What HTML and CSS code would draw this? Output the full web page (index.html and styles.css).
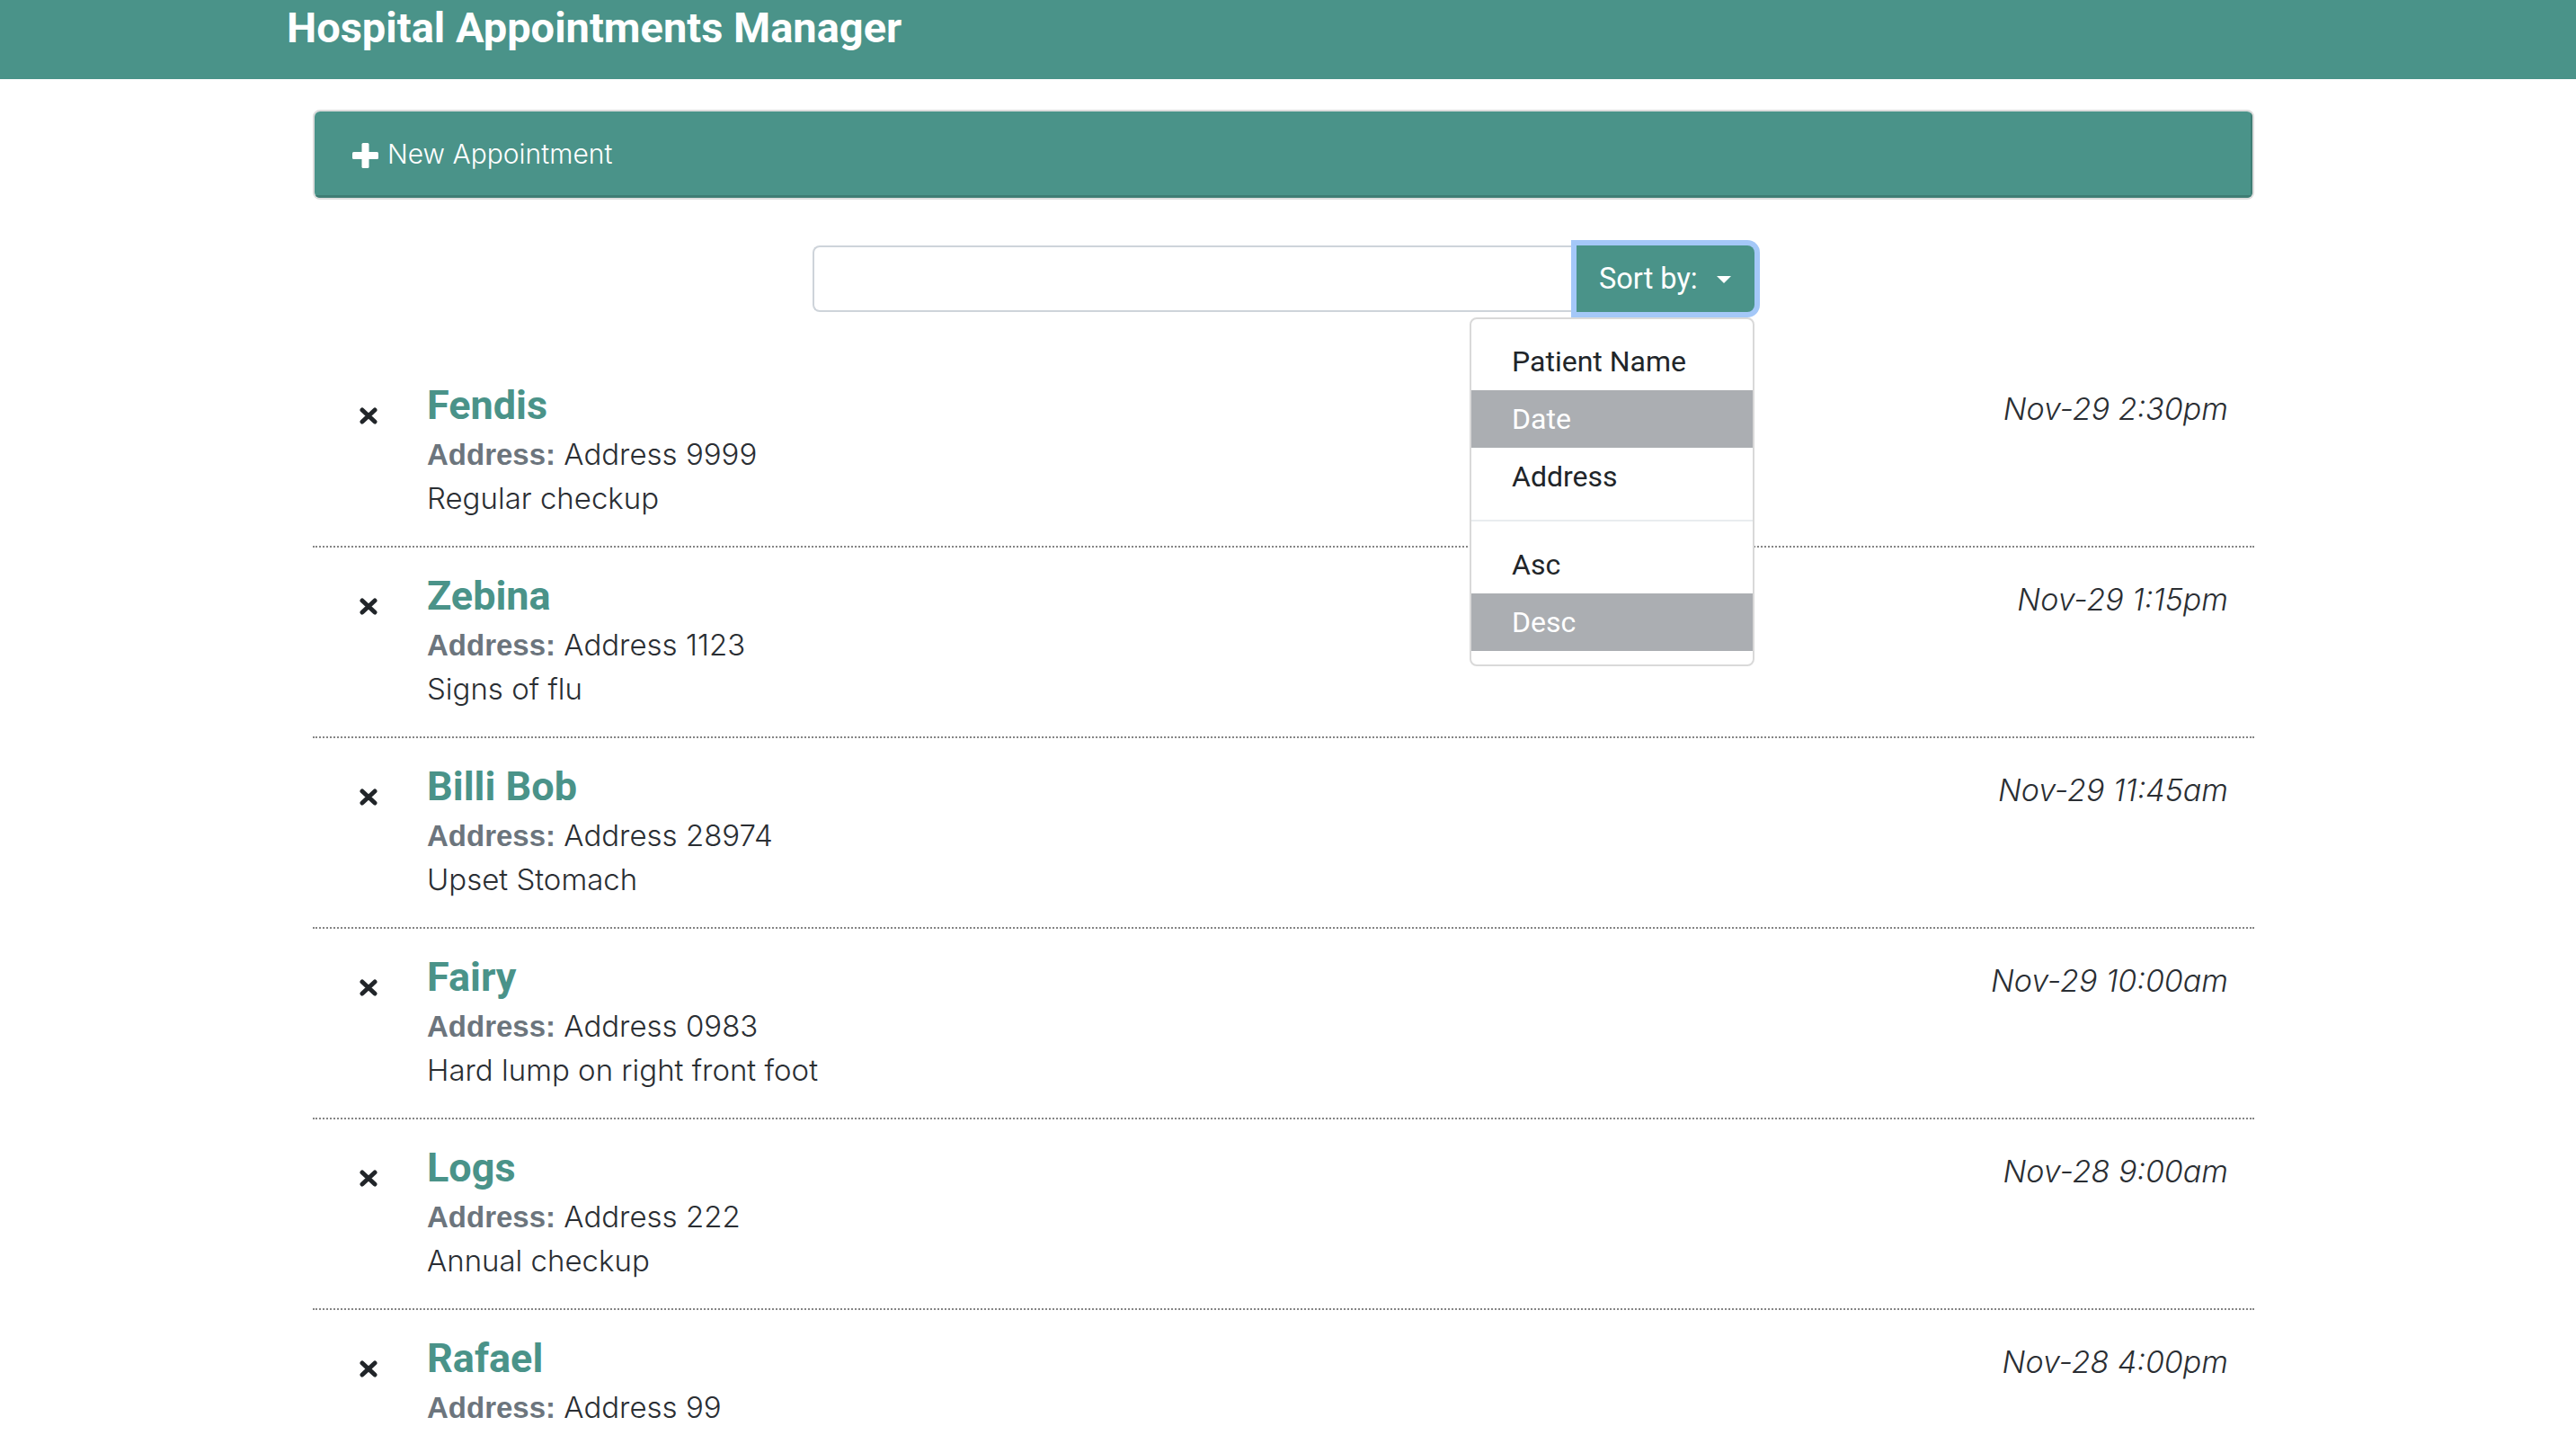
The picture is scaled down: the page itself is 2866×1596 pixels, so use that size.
FILE: index.html
```html
<!DOCTYPE html>
<html lang="en">
<head>
<meta charset="utf-8">
<title>Hospital Appointments Manager</title>
<link rel="stylesheet" href="styles.css">
</head>
<body>
<header class="topbar">
  <h1 class="brand">Hospital Appointments Manager</h1>
</header>
<main class="container">
  <div class="add-card">
    <div class="add-head">
      <svg class="plus" width="29" height="28" viewBox="0 0 29 28"><rect x="0" y="10" width="29" height="8" rx="1.5" fill="#fff"/><rect x="10.5" y="0" width="8" height="28" rx="1.5" fill="#fff"/></svg>
      <span class="add-label">New Appointment</span>
    </div>
  </div>

  <div class="search-group">
    <input class="search-input" type="text" aria-label="Search">
    <button class="sort-btn" type="button">Sort by: <span class="caret"></span></button>
    <div class="dropdown">
      <div class="dd-item">Patient Name</div>
      <div class="dd-item active">Date</div>
      <div class="dd-item">Address</div>
      <div class="dd-divider"></div>
      <div class="dd-item">Asc</div>
      <div class="dd-item active">Desc</div>
    </div>
  </div>

  <ul class="appt-list">
    <li class="appt">
      <svg class="del" width="20" height="19" viewBox="0 0 20 19"><path d="M3 3 L17 16 M17 3 L3 16" stroke="#212529" stroke-width="5" stroke-linecap="round"/></svg>
      <div class="info">
        <div class="pet">Fendis</div>
        <div class="line"><span class="lbl">Address:</span> Address 9999</div>
        <div class="line">Regular checkup</div>
      </div>
      <div class="date">Nov-29 2:30pm</div>
    </li>
    <li class="appt">
      <svg class="del" width="20" height="19" viewBox="0 0 20 19"><path d="M3 3 L17 16 M17 3 L3 16" stroke="#212529" stroke-width="5" stroke-linecap="round"/></svg>
      <div class="info">
        <div class="pet">Zebina</div>
        <div class="line"><span class="lbl">Address:</span> Address 1123</div>
        <div class="line">Signs of flu</div>
      </div>
      <div class="date">Nov-29 1:15pm</div>
    </li>
    <li class="appt">
      <svg class="del" width="20" height="19" viewBox="0 0 20 19"><path d="M3 3 L17 16 M17 3 L3 16" stroke="#212529" stroke-width="5" stroke-linecap="round"/></svg>
      <div class="info">
        <div class="pet">Billi Bob</div>
        <div class="line"><span class="lbl">Address:</span> Address 28974</div>
        <div class="line">Upset Stomach</div>
      </div>
      <div class="date">Nov-29 11:45am</div>
    </li>
    <li class="appt">
      <svg class="del" width="20" height="19" viewBox="0 0 20 19"><path d="M3 3 L17 16 M17 3 L3 16" stroke="#212529" stroke-width="5" stroke-linecap="round"/></svg>
      <div class="info">
        <div class="pet">Fairy</div>
        <div class="line"><span class="lbl">Address:</span> Address 0983</div>
        <div class="line">Hard lump on right front foot</div>
      </div>
      <div class="date">Nov-29 10:00am</div>
    </li>
    <li class="appt">
      <svg class="del" width="20" height="19" viewBox="0 0 20 19"><path d="M3 3 L17 16 M17 3 L3 16" stroke="#212529" stroke-width="5" stroke-linecap="round"/></svg>
      <div class="info">
        <div class="pet">Logs</div>
        <div class="line"><span class="lbl">Address:</span> Address 222</div>
        <div class="line">Annual checkup</div>
      </div>
      <div class="date">Nov-28 9:00am</div>
    </li>
    <li class="appt">
      <svg class="del" width="20" height="19" viewBox="0 0 20 19"><path d="M3 3 L17 16 M17 3 L3 16" stroke="#212529" stroke-width="5" stroke-linecap="round"/></svg>
      <div class="info">
        <div class="pet">Rafael</div>
        <div class="line"><span class="lbl">Address:</span> Address 99</div>
      </div>
      <div class="date">Nov-28 4:00pm</div>
    </li>
  </ul>
</main>
</body>
</html>
```

FILE: styles.css
```css
* { box-sizing: border-box; }

html, body {
  margin: 0;
  padding: 0;
  background: #ffffff;
}

body {
  font-family: Roboto, "Liberation Sans", Arial, sans-serif;
  color: #212529;
  overflow: hidden;
}

.topbar {
  height: 88px;
  background: #4a9389;
  padding-left: 319px;
}

.brand {
  margin: 0;
  font-size: 47px;
  line-height: 62px;
  font-weight: 700;
  color: #ffffff;
}

.container {
  width: 2170px;
  padding-right: 10px;
  margin: 0 auto;
}

.add-card {
  margin-top: 34px;
  border: 2px solid #dcdcdc;
  border-radius: 8px;
  overflow: hidden;
}

.add-head {
  height: 96px;
  background: #4a9389;
  border-bottom: 3px solid #3f7d74;
  border-right: 2px solid #3f7d74;
  display: flex;
  align-items: center;
  padding-left: 42px;
}

.plus {
  display: block;
  margin-right: 10px;
  margin-top: 4px;
}

.add-label {
  color: #ffffff;
  font-family: Inter, Roboto, sans-serif;
  font-size: 30px;
  font-weight: 300;
}

.search-group {
  position: relative;
  width: 1048px;
  height: 74px;
  margin: 51px auto 0;
  display: flex;
}

.search-input {
  width: 850px;
  height: 74px;
  border: 2px solid #ced4da;
  border-right: none;
  border-radius: 8px 0 0 8px;
  padding: 0 20px;
  font-family: inherit;
  font-size: 32px;
  outline: none;
}

.sort-btn {
  width: 198px;
  height: 74px;
  border: none;
  border-radius: 0 8px 8px 0;
  background: #4a9389;
  color: #ffffff;
  font-family: inherit;
  font-size: 32.5px;
  font-weight: 400;
  padding: 0 0 0 25px;
  text-align: left;
  box-shadow: 0 0 0 6px #a4c8f8;
  display: flex;
  align-items: center;
}

.caret {
  display: inline-block;
  width: 0;
  height: 0;
  margin-left: 21px;
  margin-top: 2px;
  border-top: 8px solid #ffffff;
  border-left: 8px solid transparent;
  border-right: 8px solid transparent;
}

.dropdown {
  position: absolute;
  top: 80px;
  right: 0;
  width: 317px;
  background: #ffffff;
  border: 2px solid #d9d9d9;
  border-radius: 8px;
  padding: 15px 0;
  z-index: 10;
}

.dd-item {
  height: 64px;
  line-height: 64px;
  padding-left: 45px;
  font-size: 32px;
  color: #212529;
}

.dd-item.active {
  background: #abaeb2;
  color: #ffffff;
}

.dd-divider {
  height: 2px;
  margin: 16px 0;
  background: #e9ecef;
}

.appt-list {
  list-style: none;
  margin: 50px 0 0;
  padding: 0;
}

.appt {
  display: flex;
  align-items: flex-start;
  padding: 28px 29px 28px 52px;
  border-bottom: 2px dotted #858585;
}

.del {
  display: block;
  flex: none;
  margin-top: 28px;
  margin-right: 55px;
}

.info {
  flex: 1;
}

.pet {
  font-size: 45px;
  line-height: 52px;
  font-weight: 700;
  color: #4a9389;
  margin-bottom: 4px;
}

.line {
  font-family: Inter, Roboto, sans-serif;
  font-size: 33px;
  line-height: 49px;
  font-weight: 300;
  color: #2a2e33;
}

.lbl {
  font-family: "Liberation Sans", Arial, sans-serif;
  font-weight: 700;
  color: #6c757d;
}

.date {
  margin-top: 4px;
  font-family: Inter, Roboto, sans-serif;
  font-size: 34px;
  line-height: 52px;
  font-weight: 300;
  font-style: italic;
  color: #2a2e33;
}
```
